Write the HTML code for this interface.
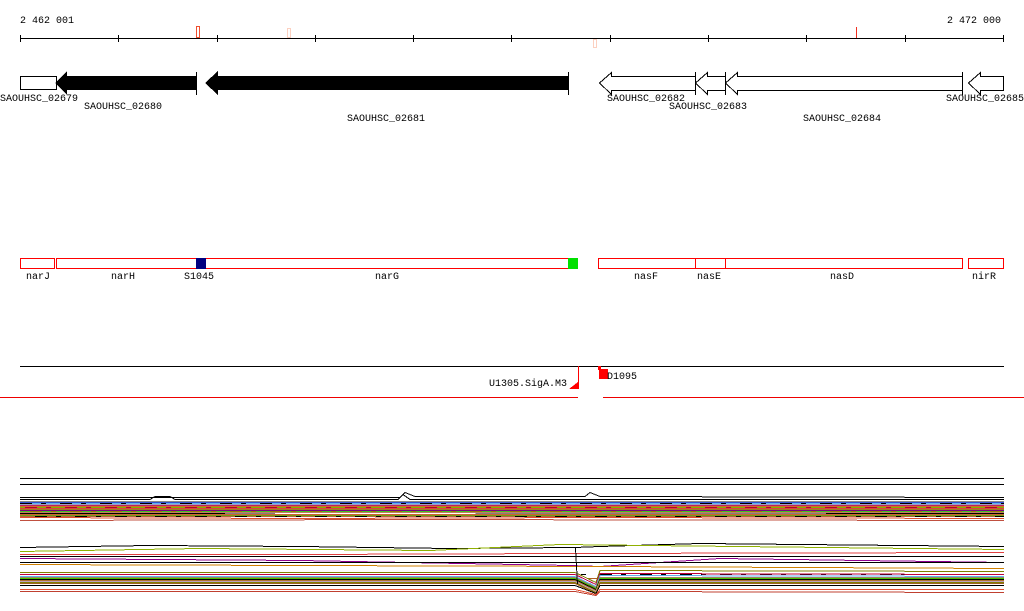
<!DOCTYPE html>
<html><head><meta charset="utf-8"><style>
html,body{margin:0;padding:0;background:#fff;width:1024px;height:611px;overflow:hidden}
svg text{font-family:"Liberation Mono","DejaVu Sans Mono",monospace;font-size:10px;fill:#000}
</style></head><body>
<svg width="1024" height="611" viewBox="0 0 1024 611" xmlns="http://www.w3.org/2000/svg" shape-rendering="crispEdges">
<text x="20" y="23">2 462 001</text>
<text x="947" y="23">2 472 000</text>
<line x1="20" y1="38.5" x2="1004" y2="38.5" stroke="#000"/>
<g stroke="#000">
<line x1="20.5" y1="35" x2="20.5" y2="42"/><line x1="118.5" y1="35" x2="118.5" y2="42"/><line x1="217.5" y1="35" x2="217.5" y2="42"/><line x1="315.5" y1="35" x2="315.5" y2="42"/><line x1="413.5" y1="35" x2="413.5" y2="42"/><line x1="511.5" y1="35" x2="511.5" y2="42"/><line x1="610.5" y1="35" x2="610.5" y2="42"/><line x1="708.5" y1="35" x2="708.5" y2="42"/><line x1="806.5" y1="35" x2="806.5" y2="42"/><line x1="905.5" y1="35" x2="905.5" y2="42"/><line x1="1003.5" y1="35" x2="1003.5" y2="42"/>
</g>
<rect x="196.5" y="26.5" width="3" height="11" fill="none" stroke="#f05030"/>
<rect x="287.5" y="28.5" width="3" height="9" fill="none" stroke="#fcd0c0"/>
<rect x="593.5" y="39.5" width="3" height="8" fill="none" stroke="#fcd0c0"/>
<line x1="856.5" y1="27" x2="856.5" y2="38" stroke="#f03020"/>

<rect x="20.5" y="76.5" width="36" height="13" fill="#fff" stroke="#000"/>
<polygon points="55,83 67,71 67,76 196,76 196,90 67,90 67,95" fill="#000"/>
<line x1="196.5" y1="72" x2="196.5" y2="95" stroke="#000"/>
<polygon points="205,83 218,71 218,76 568,76 568,90 218,90 218,95" fill="#000"/>
<line x1="568.5" y1="72" x2="568.5" y2="95" stroke="#000"/>
<g fill="#fff" stroke="#000">
<polygon points="599.5,83 611.5,72.5 611.5,76.5 695.5,76.5 695.5,90.5 611.5,90.5 611.5,94.5"/>
<polygon points="695.5,83 707.5,72.5 707.5,76.5 725.5,76.5 725.5,90.5 707.5,90.5 707.5,94.5"/>
<polygon points="725.5,83 737.5,72.5 737.5,76.5 962.5,76.5 962.5,90.5 737.5,90.5 737.5,94.5"/>
<polygon points="968.5,83 980.5,72.5 980.5,76.5 1003.5,76.5 1003.5,90.5 980.5,90.5 980.5,94.5"/>
<line x1="695.5" y1="72" x2="695.5" y2="95"/><line x1="725.5" y1="72" x2="725.5" y2="95"/><line x1="962.5" y1="72" x2="962.5" y2="95"/>
</g>
<text x="0" y="101">SAOUHSC_02679</text>
<text x="84" y="109">SAOUHSC_02680</text>
<text x="347" y="121">SAOUHSC_02681</text>
<text x="607" y="101">SAOUHSC_02682</text>
<text x="669" y="109">SAOUHSC_02683</text>
<text x="803" y="121">SAOUHSC_02684</text>
<text x="946" y="101">SAOUHSC_02685</text>

<g fill="#fff" stroke="#f00">
<rect x="20.5" y="258.5" width="34" height="10"/>
<rect x="56.5" y="258.5" width="512" height="10"/>
<rect x="598.5" y="258.5" width="97" height="10"/>
<rect x="695.5" y="258.5" width="30" height="10"/>
<rect x="725.5" y="258.5" width="237" height="10"/>
<rect x="968.5" y="258.5" width="35" height="10"/>
</g>
<rect x="196" y="258" width="10" height="11" fill="#000080"/>
<rect x="568" y="258" width="10" height="11" fill="#00e000"/>
<text x="26" y="279">narJ</text>
<text x="111" y="279">narH</text>
<text x="184" y="279">S1045</text>
<text x="375" y="279">narG</text>
<text x="634" y="279">nasF</text>
<text x="697" y="279">nasE</text>
<text x="830" y="279">nasD</text>
<text x="972" y="279">nirR</text>

<line x1="20" y1="366.5" x2="1004" y2="366.5" stroke="#000"/>
<line x1="0" y1="397.5" x2="578" y2="397.5" stroke="#e00"/>
<line x1="603" y1="397.5" x2="1024" y2="397.5" stroke="#e00"/>
<line x1="578.5" y1="366" x2="578.5" y2="389" stroke="#f00"/>
<polygon points="569,389 578,389 578,382" fill="#f00"/>
<text x="489" y="386">U1305.SigA.M3</text>
<rect x="598" y="366" width="3" height="4" fill="#f00"/>
<rect x="599" y="369" width="9" height="10" fill="#f00"/>
<text x="607" y="379">D1095</text>

<line x1="20" y1="478.5" x2="1004" y2="478.5" stroke="#000"/>
<line x1="20" y1="484.5" x2="1004" y2="484.5" stroke="#000"/>

<g fill="none" stroke-width="1">
<polyline stroke="#000" points="20,499.5 150,499.5 155,496.5 170,496.5 175,499.5 398,499.5 403,494.5 410,499.5 1004,499.5"/>
<polyline stroke="#000" points="20,497.5 400,497.5 405,492.5 415,496.5 585,496.5 590,492.5 600,496.5 1004,497.5"/>
<polyline stroke="#888" points="20,501.5 1004,501.5"/>
<polyline stroke="#3050d0" points="20,502.5 1004,502.5"/>
<polyline stroke="#60b0f0" points="20,503.5 1004,503.5"/>
<polyline stroke="#a0a0c0" points="20,504.5 1004,504.5"/>
<polyline stroke="#c02060" points="20,505.5 1004,505.5"/>
<polyline stroke="#d07020" points="20,506.5 1004,506.5"/>
<polyline stroke="#80b000" points="20,507.5 1004,507.5"/>
<polyline stroke="#e04040" points="20,508.5 1004,508.5"/>
<polyline stroke="#a08020" points="20,509.5 1004,509.5"/>
<polyline stroke="#800080" points="20,510.5 1004,510.5"/>
<polyline stroke="#40c020" points="20,511.5 1004,511.5"/>
<polyline stroke="#c08060" points="20,512.5 1004,512.5"/>
<polyline stroke="#000" points="20,513.5 200,513.5 300,514.5 1004,513.5"/>
<polyline stroke="#d06030" points="20,514.5 1004,514.5"/>
<polyline stroke="#70a010" points="20,515.5 1004,515.5"/>
<polyline stroke="#b06040" points="20,516.5 1004,516.5"/>
<polyline stroke="#e05030" points="20,517.5 300,518.5 600,517.5 1004,518.5"/>
<polyline stroke="#c05040" points="20,520.5 400,519.5 1004,520.5"/>
<g stroke-dasharray="12 9 5 14">
<line x1="20" y1="503.5" x2="1004" y2="503.5" stroke="#000"/>
<line x1="25" y1="507.5" x2="1004" y2="507.5" stroke="#b00030"/>
<line x1="30" y1="511.5" x2="1004" y2="511.5" stroke="#908000"/>
<line x1="35" y1="516.5" x2="1004" y2="516.5" stroke="#000"/>
<line x1="40" y1="574.5" x2="1004" y2="574.5" stroke="#000"/>
<line x1="28" y1="578.5" x2="1004" y2="578.5" stroke="#b06020"/>
<line x1="45" y1="583.5" x2="1004" y2="583.5" stroke="#60b0f0"/>
</g>

<polyline stroke="#000" points="20,547.5 150,545.5 300,546.5 450,548.5 575,547.5 600,546.5 700,543.5 1004,546.5"/>
<polyline stroke="#90b000" points="20,551.5 200,548.5 430,550.5 560,544.5 1004,549.5"/>
<polyline stroke="#e04040" points="20,554.5 300,554.5 575,553.5 1004,552.5"/>
<polyline stroke="#000" points="20,556.5 575,556.5 1004,556.5"/>
<polyline stroke="#900090" points="20,558.5 300,560.5 570,565.5 600,566.5 720,558.5 1004,562.5"/>
<polyline stroke="#000" points="20,562.5 1004,562.5"/>
<polyline stroke="#d08000" points="20,564.5 300,565.5 600,566.5 1004,568.5"/>
<polyline stroke="#808000" points="20,572.5 575,572.5 596,582.5 600,570.5 1004,571.5"/>
<polyline stroke="#c00040" points="20,574.5 575,574.5 596,584.5 600,573.5 1004,574.5"/>
<polyline stroke="#60b0f0" points="20,576.5 575,576.5 596,586.5 600,575.5 1004,576.5"/>
<polyline stroke="#a08060" points="20,577.5 575,577.5 596,587.5 600,577.5 1004,577.5"/>
<polyline stroke="#40c000" points="20,578.5 575,578.5 596,588.5 600,578.5 1004,578.5"/>
<polyline stroke="#000" points="20,579.5 575,579.5 596,589.5 600,579.5 1004,579.5"/>
<polyline stroke="#b07030" points="20,580.5 575,580.5 596,590.5 600,580.5 1004,580.5"/>
<polyline stroke="#c0a0c0" points="20,581.5 575,581.5 596,591.5 600,581.5 1004,581.5"/>
<polyline stroke="#808000" points="20,582.5 575,582.5 596,592.5 600,582.5 1004,582.5"/>
<polyline stroke="#a06020" points="20,583.5 575,583.5 596,593.5 600,583.5 1004,583.5"/>
<polyline stroke="#000" points="20,585.5 575,585.5 596,593.5 600,585.5 1004,585.5"/>
<polyline stroke="#e05030" points="20,589.5 575,589.5 596,594.5 600,589.5 1004,589.5"/>
<polyline stroke="#c04030" points="20,591.5 575,591.5 596,595.5 600,591.5 1004,592.5"/>
<polyline stroke="#000" points="575.5,548 577.5,584"/>
</g>
</svg>
</body></html>
